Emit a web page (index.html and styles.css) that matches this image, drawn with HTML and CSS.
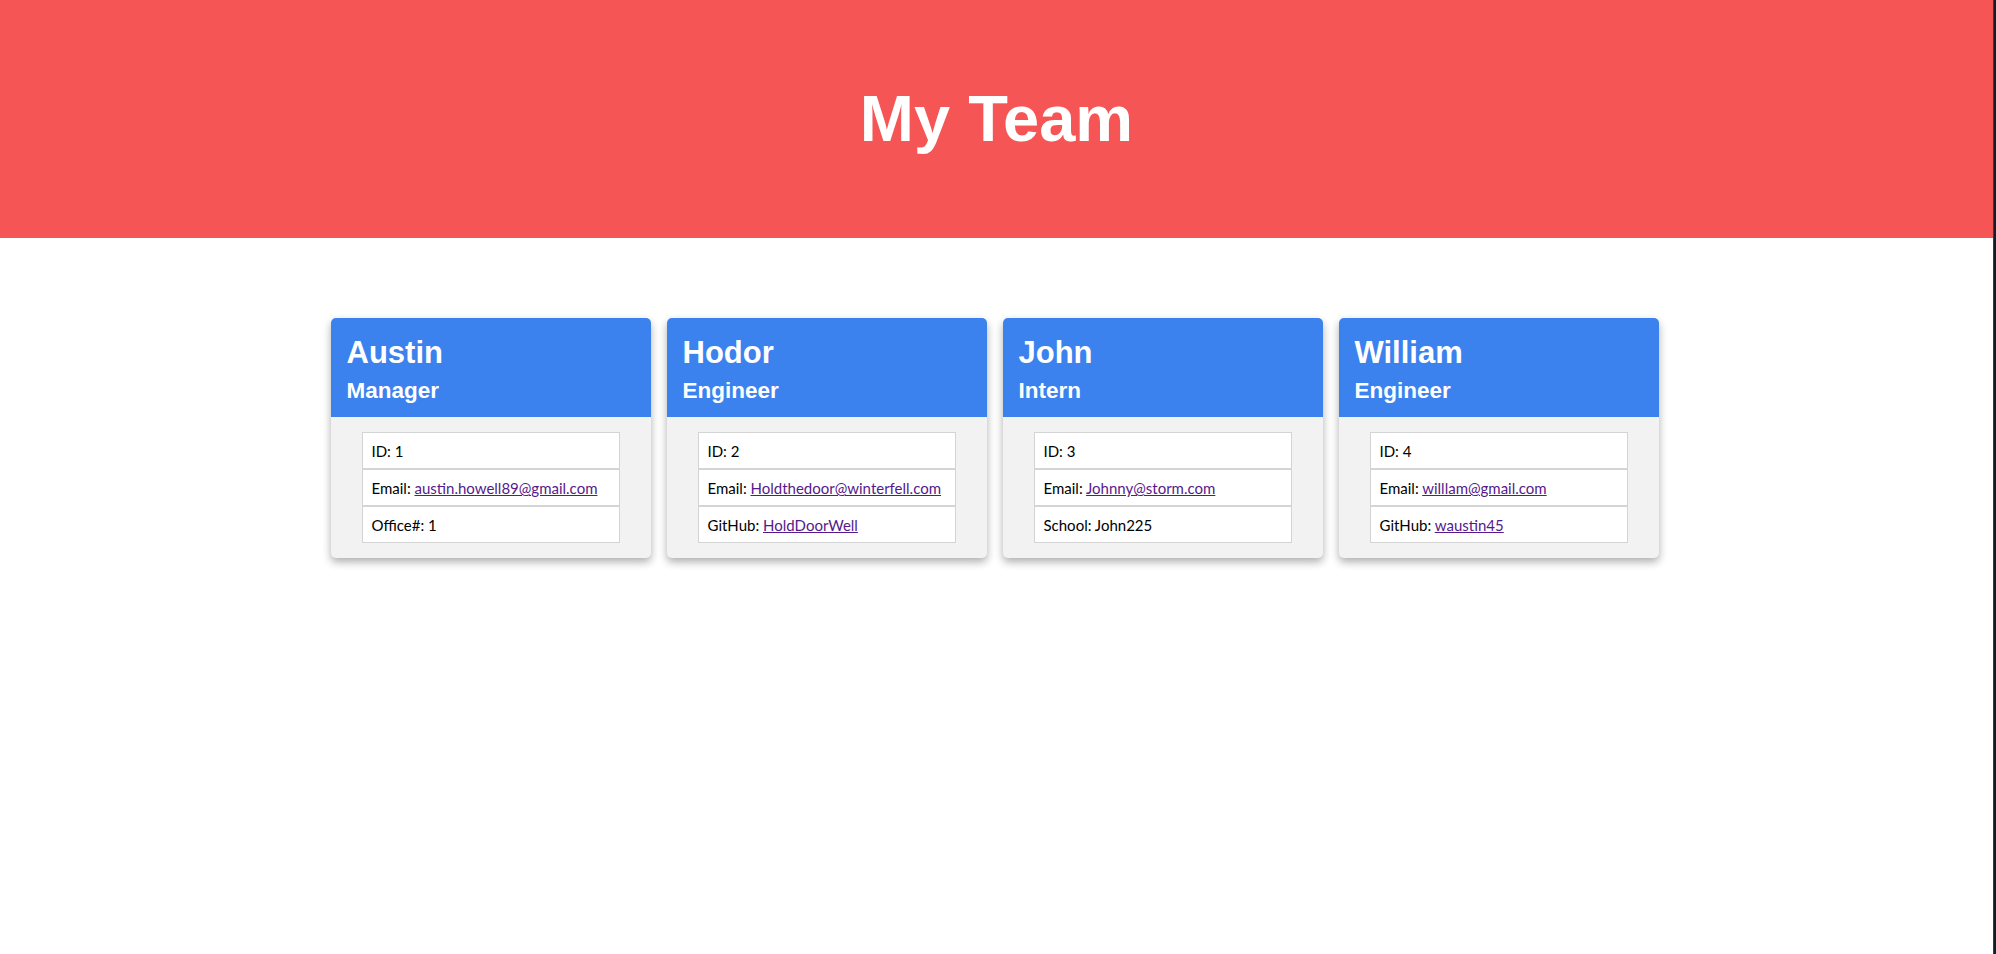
FILE: index.html
```html
<!DOCTYPE html>
<html lang="en">
<head>
<meta charset="UTF-8">
<title>My Team</title>
<link rel="stylesheet" href="styles.css">
</head>
<body>
<div class="page">
  <main class="main">
    <header class="banner">
      <h1 class="banner-title">My Team</h1>
    </header>
    <section class="team">
      <article class="card">
        <div class="card-head">
          <h2 class="card-name">Austin</h2>
          <h3 class="card-role">Manager</h3>
        </div>
        <div class="card-body">
          <ul class="info">
            <li class="info-item">ID: 1</li>
            <li class="info-item">Email: <a href="#">austin.howell89@gmail.com</a></li>
            <li class="info-item">Office#: 1</li>
          </ul>
        </div>
      </article>
      <article class="card">
        <div class="card-head">
          <h2 class="card-name">Hodor</h2>
          <h3 class="card-role">Engineer</h3>
        </div>
        <div class="card-body">
          <ul class="info">
            <li class="info-item">ID: 2</li>
            <li class="info-item">Email: <a href="#">Holdthedoor@winterfell.com</a></li>
            <li class="info-item">GitHub: <a href="#">HoldDoorWell</a></li>
          </ul>
        </div>
      </article>
      <article class="card">
        <div class="card-head">
          <h2 class="card-name">John</h2>
          <h3 class="card-role">Intern</h3>
        </div>
        <div class="card-body">
          <ul class="info">
            <li class="info-item">ID: 3</li>
            <li class="info-item">Email: <a href="#">Johnny@storm.com</a></li>
            <li class="info-item">School: John225</li>
          </ul>
        </div>
      </article>
      <article class="card">
        <div class="card-head">
          <h2 class="card-name">William</h2>
          <h3 class="card-role">Engineer</h3>
        </div>
        <div class="card-body">
          <ul class="info">
            <li class="info-item">ID: 4</li>
            <li class="info-item">Email: <a href="#">willlam@gmail.com</a></li>
            <li class="info-item">GitHub: <a href="#">waustin45</a></li>
          </ul>
        </div>
      </article>
    </section>
  </main>
  <div class="edge"></div>
</div>
</body>
</html>
```
FILE: styles.css
```css
* { box-sizing: border-box; }

html, body {
  margin: 0;
  padding: 0;
  background: #ffffff;
}

.page {
  display: flex;
  min-height: 100vh;
}

.main {
  flex: 1;
  min-width: 0;
}

.edge {
  width: 3px;
  background: #0f1f28;
  border-left: 1px solid #1f4a38;
}

.banner {
  height: 238px;
  background: #f55555;
  display: flex;
  align-items: center;
  justify-content: center;
}

.banner-title {
  margin: 0;
  color: #ffffff;
  font-family: "Liberation Sans", Arial, sans-serif;
  font-weight: 700;
  font-size: 65px;
  line-height: 1.2;
}

.team {
  display: flex;
  justify-content: center;
  gap: 16px;
  padding-top: 80px;
  padding-right: 4px;
}

.card {
  width: 320px;
  background: #f2f2f2;
  border-radius: 5px;
  box-shadow: 0 4px 9px rgba(0, 0, 0, 0.32);
  overflow: hidden;
}

.card-head {
  background: #3b82ee;
  color: #ffffff;
  padding: 16px 16px 11px;
  height: 99px;
}

.card-name {
  margin: 0 0 6px;
  font-family: "Liberation Sans", Arial, sans-serif;
  font-weight: 700;
  font-size: 31px;
  line-height: 38px;
}

.card-role {
  margin: 0;
  font-family: "Liberation Sans", Arial, sans-serif;
  font-weight: 700;
  font-size: 22.5px;
  line-height: 26px;
}

.card-body {
  padding: 15px 31px;
}

.info {
  list-style: none;
  margin: 0;
  padding: 0;
}

.info-item {
  background: #ffffff;
  border: 1px solid #d4d4d4;
  height: 37px;
  padding: 0 9px;
  font-family: Lato, "Liberation Sans", sans-serif;
  font-size: 15px;
  line-height: 36px;
  color: #000000;
}

.info-item a {
  color: #551a8b;
  text-decoration: underline;
}
```
